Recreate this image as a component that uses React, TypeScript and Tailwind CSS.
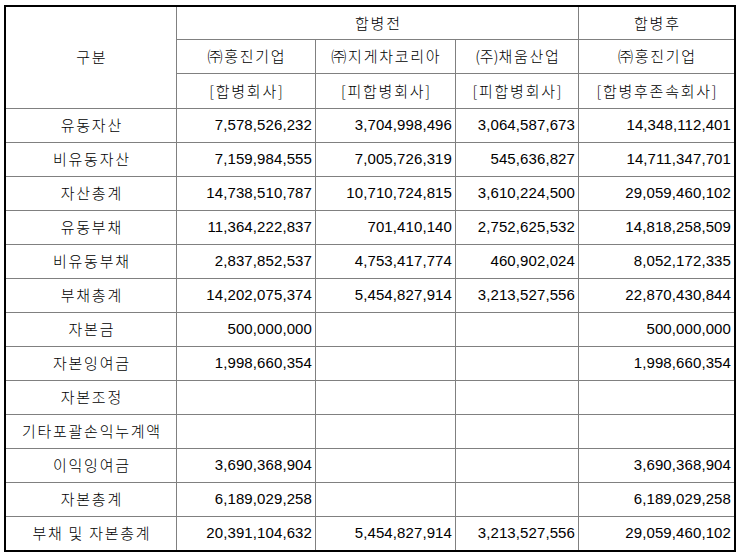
const rows: string[][] = [
  ["유동자산", "7,578,526,232", "3,704,998,496", "3,064,587,673", "14,348,112,401"],
  ["비유동자산", "7,159,984,555", "7,005,726,319", "545,636,827", "14,711,347,701"],
  ["자산총계", "14,738,510,787", "10,710,724,815", "3,610,224,500", "29,059,460,102"],
  ["유동부채", "11,364,222,837", "701,410,140", "2,752,625,532", "14,818,258,509"],
  ["비유동부채", "2,837,852,537", "4,753,417,774", "460,902,024", "8,052,172,335"],
  ["부채총계", "14,202,075,374", "5,454,827,914", "3,213,527,556", "22,870,430,844"],
  ["자본금", "500,000,000", "", "", "500,000,000"],
  ["자본잉여금", "1,998,660,354", "", "", "1,998,660,354"],
  ["자본조정", "", "", "", ""],
  ["기타포괄손익누계액", "", "", "", ""],
  ["이익잉여금", "3,690,368,904", "", "", "3,690,368,904"],
  ["자본총계", "6,189,029,258", "", "", "6,189,029,258"],
  ["부채 및 자본총계", "20,391,104,632", "5,454,827,914", "3,213,527,556", "29,059,460,102"],
];

const ko = "font-['Noto_Sans_CJK_KR',sans-serif] text-[15px] font-light tracking-[1.75px] pl-[1.75px]";
const num = "font-['Liberation_Sans',Arial,sans-serif] text-[15px] tracking-[0.1px]";

function Head({ children, className = "" }: { children?: React.ReactNode; className?: string }) {
  return (
    <div className={`flex items-center justify-center border-[#808080] ${ko} ${className}`}>
      {children}
    </div>
  );
}

export default function App() {
  return (
    <div className="min-h-screen bg-white text-black pt-[5px] pl-[4px]">
      <div className="w-[732px] border-2 border-black grid grid-cols-[171px_139px_140px_123px_155px] grid-rows-[33px_34px_35px_repeat(12,34px)_33px]">
        <Head className="row-span-3 border-r border-b">구분</Head>
        <Head className="col-span-3 border-r border-b">합병전</Head>
        <Head className="border-b">합병후</Head>

        <Head className="border-r border-b">㈜홍진기업</Head>
        <Head className="border-r border-b">㈜지게차코리아</Head>
        <Head className="border-r border-b">
          <span className="tracking-normal">(주)</span>채움산업
        </Head>
        <Head className="border-b">㈜홍진기업</Head>

        <Head className="border-r border-b">[합병회사]</Head>
        <Head className="border-r border-b">[피합병회사]</Head>
        <Head className="border-r border-b">[피합병회사]</Head>
        <Head className="border-b">[합병후존속회사]</Head>

        {rows.map((r, i) => {
          const last = i === rows.length - 1;
          const bb = last ? "" : "border-b";
          return [
            <Head key={`${i}-0`} className={`border-r ${bb}`}>
              {r[0]}
            </Head>,
            ...r.slice(1).map((v, j) => (
              <div
                key={`${i}-${j + 1}`}
                className={`flex items-center justify-end pr-[3px] border-[#808080] ${num} ${bb} ${
                  j < 3 ? "border-r" : ""
                }`}
              >
                {v}
              </div>
            )),
          ];
        })}
      </div>
    </div>
  );
}
